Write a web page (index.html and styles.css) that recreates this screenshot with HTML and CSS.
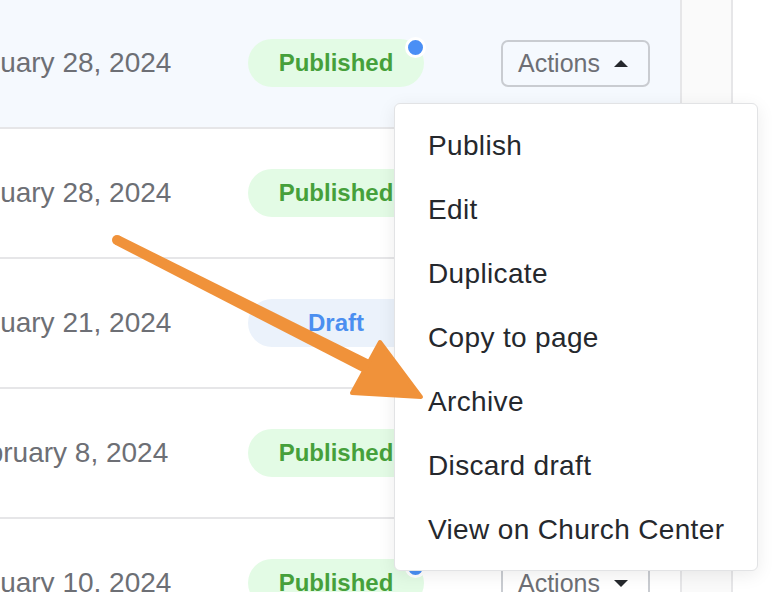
FILE: index.html
```html
<!DOCTYPE html>
<html lang="en">
<head>
  <meta charset="UTF-8">
  <title>Pages</title>
  <link rel="stylesheet" href="styles.css">
</head>
<body>
  <div class="page">
    <div class="list">
      <div class="row is-open">
        <div class="date">January 28, 2024</div>
        <span class="badge published">Published<span class="dot"></span></span>
        <button class="actions">Actions <span class="caret up"></span></button>
      </div>
      <div class="row">
        <div class="date">January 28, 2024</div>
        <span class="badge published">Published</span>
        <button class="actions">Actions <span class="caret"></span></button>
      </div>
      <div class="row">
        <div class="date">January 21, 2024</div>
        <span class="badge draft">Draft</span>
        <button class="actions">Actions <span class="caret"></span></button>
      </div>
      <div class="row">
        <div class="date">February 8, 2024</div>
        <span class="badge published">Published</span>
        <button class="actions">Actions <span class="caret"></span></button>
      </div>
      <div class="row">
        <div class="date">January 10, 2024</div>
        <span class="badge published">Published<span class="dot"></span></span>
        <button class="actions">Actions <span class="caret"></span></button>
      </div>
    </div>
    <div class="side"></div>

    <ul class="menu">
      <li>Publish</li>
      <li>Edit</li>
      <li>Duplicate</li>
      <li>Copy to page</li>
      <li>Archive</li>
      <li>Discard draft</li>
      <li>View on Church Center</li>
    </ul>

    <!-- annotation arrow pointing at "Archive" -->
    <svg class="arrow" width="776" height="592" viewBox="0 0 776 592">
      <circle cx="117" cy="240" r="5" fill="#f0923a"/>
      <polygon points="114.7,244.5 119.3,235.5 373.2,361.8 366.8,374.2" fill="#f0923a"/>
      <polygon points="380,342 421,397 352,393" fill="#f0923a" stroke="#f0923a" stroke-width="4" stroke-linejoin="round"/>
    </svg>
  </div>
</body>
</html>
```

FILE: styles.css
```css
:root {
  --line: #e6e6e8;
  --muted: #6d6f75;
  --text: #25282d;
  --green: #46a03b;
  --green-bg: #e3fbe5;
  --blue: #4b8ff0;
  --blue-bg: #ebf2fb;
  --orange: #f0923a;
}

body {
  margin: 0;
  font-family: 'Liberation Sans', Arial, sans-serif;
  background: #fff;
  overflow: hidden;
}

.page {
  position: relative;
  display: flex;
  width: 776px;
  height: 592px;
  overflow: hidden;
}

.list {
  width: 680px;
  margin-top: -1px;
  border-right: 2px solid var(--line);
  overflow: hidden;
  flex-shrink: 0;
}

.row {
  display: flex;
  align-items: center;
  height: 128px;
  border-bottom: 2px solid var(--line);
}

.row.is-open {
  background: #f5f9fe;
}

.date {
  flex: 0 0 293px;
  margin-left: -45px;
  font-size: 28px;
  color: var(--muted);
  white-space: nowrap;
}

.badge {
  position: relative;
  flex: 0 0 176px;
  height: 48px;
  border-radius: 24px;
  display: flex;
  align-items: center;
  justify-content: center;
  font-size: 24px;
  font-weight: bold;
}

.badge.published {
  background: var(--green-bg);
  color: var(--green);
}

.badge.draft {
  background: var(--blue-bg);
  color: var(--blue);
}

.dot {
  position: absolute;
  top: -2px;
  right: -2px;
  width: 15px;
  height: 15px;
  border-radius: 50%;
  background: #4a8ff5;
  border: 3px solid #fff;
}

.actions {
  margin-left: 77px;
  width: 149px;
  height: 47px;
  display: flex;
  align-items: center;
  padding: 0 0 0 15px;
  border: 2px solid #c9ccd1;
  border-radius: 7px;
  background: transparent;
  font-family: inherit;
  font-size: 25px;
  color: var(--muted);
}

.caret {
  margin-left: 14px;
  width: 0;
  height: 0;
  border-left: 7px solid transparent;
  border-right: 7px solid transparent;
  border-top: 7px solid var(--text);
}

.caret.up {
  border-top: none;
  border-bottom: 7px solid var(--text);
}

.side {
  width: 49px;
  flex-shrink: 0;
  background: #fafafa;
  border-right: 2px solid var(--line);
}

.menu {
  position: absolute;
  left: 394px;
  top: 103px;
  width: 364px;
  box-sizing: border-box;
  margin: 0;
  padding: 10px 0 8px;
  list-style: none;
  background: #fff;
  border: 1px solid #e2e3e5;
  border-radius: 6px;
  box-shadow: 0 4px 18px rgba(0, 0, 0, 0.08);
}

.menu li {
  height: 64px;
  display: flex;
  align-items: center;
  padding-left: 33px;
  font-size: 28px;
  letter-spacing: 0.35px;
  color: var(--text);
}

.arrow {
  position: absolute;
  left: 0;
  top: 0;
  pointer-events: none;
}
```
